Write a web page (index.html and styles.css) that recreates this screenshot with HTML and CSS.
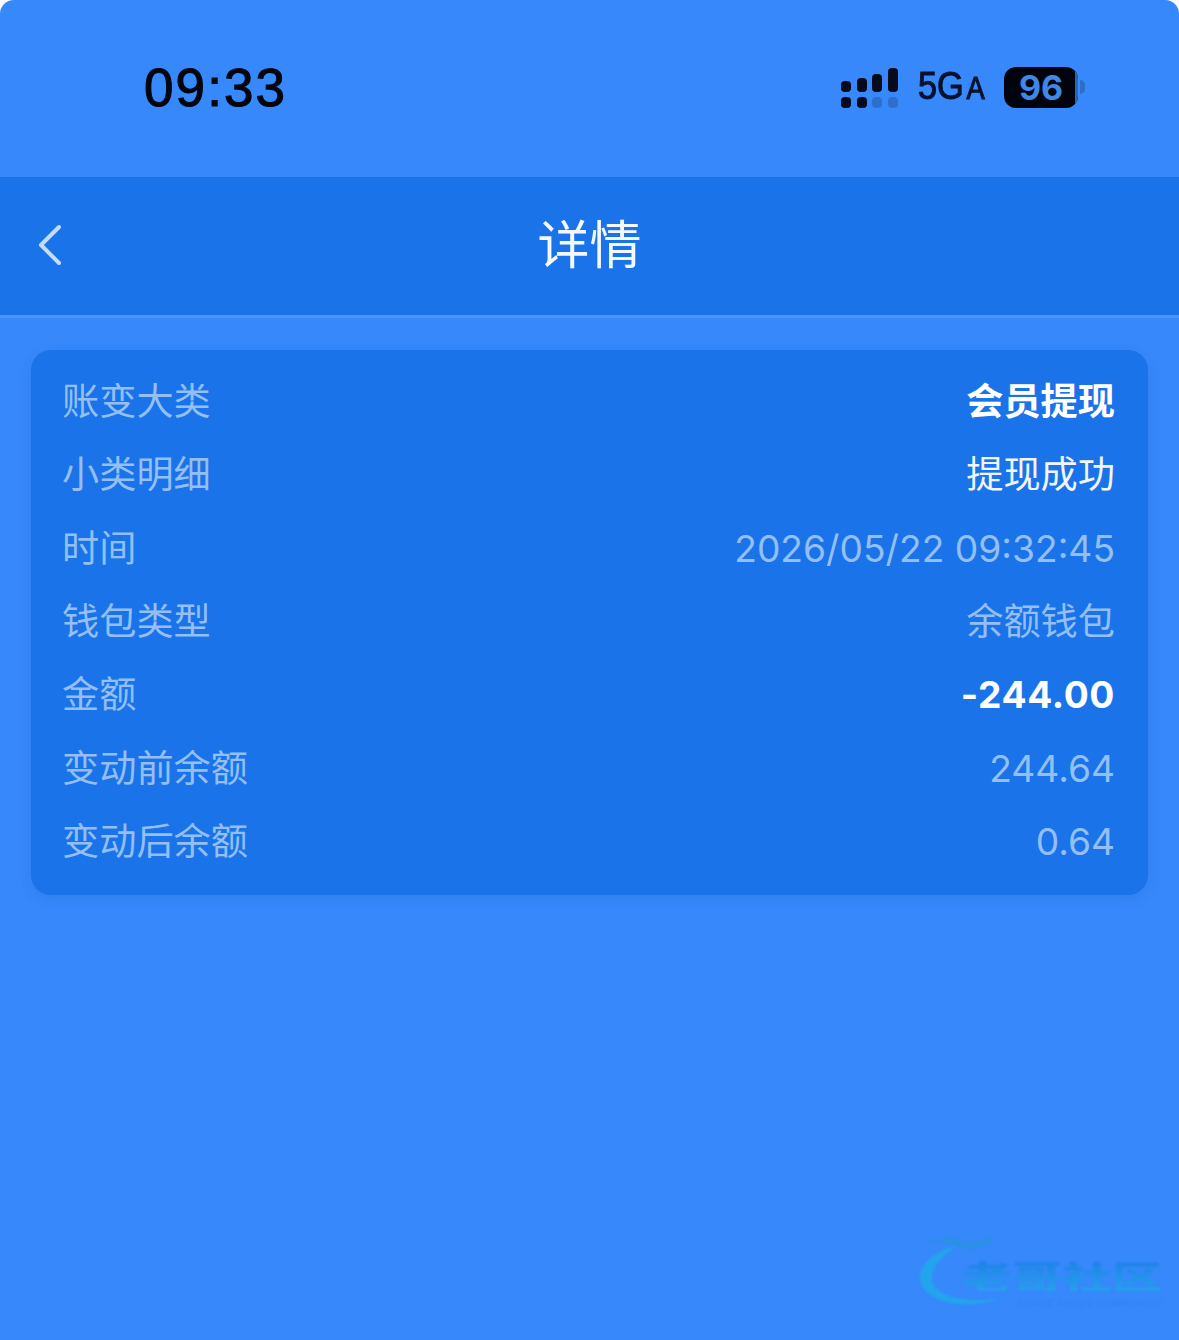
FILE: index.html
```html
<!DOCTYPE html>
<html lang="zh">
<head>
<meta charset="utf-8">
<title>详情</title>
<link rel="stylesheet" href="styles.css">
</head>
<body>
<div class="screen">
  <div class="status">
    <span class="time">09:33</span>
    <div class="indicators">
      <svg class="signal" width="60" height="42" viewBox="0 0 60 42">
        <rect x="1" y="14" width="10" height="11" rx="4" fill="#050b1c"/>
        <rect x="17" y="11" width="10" height="14" rx="4" fill="#050b1c"/>
        <rect x="32" y="7" width="10" height="18" rx="4" fill="#050b1c"/>
        <rect x="48" y="1" width="10" height="24" rx="4" fill="#050b1c"/>
        <rect x="1" y="30" width="10" height="11" rx="4" fill="#050b1c"/>
        <rect x="17" y="30" width="10" height="11" rx="4" fill="#050b1c"/>
        <rect x="32" y="30" width="10" height="11" rx="4" fill="#2f6fcb"/>
        <rect x="48" y="30" width="10" height="11" rx="4" fill="#2f6fcb"/>
      </svg>
      <span class="net">5G<small>A</small></span>
      <div class="battery"><span class="level">96</span><span class="track"></span></div>
      <span class="tip"></span>
    </div>
  </div>
  <header class="navbar">
    <svg class="back" width="30" height="42" viewBox="0 0 30 42">
      <path d="M24 3 L6 21 L24 39" fill="none" stroke="#c3dcfb" stroke-width="4" stroke-linecap="round" stroke-linejoin="round"/>
    </svg>
    <h1 class="title">详情</h1>
  </header>
  <main class="content">
    <section class="card">
      <div class="row"><span class="label">账变大类</span><span class="value strong">会员提现</span></div>
      <div class="row"><span class="label">小类明细</span><span class="value bright">提现成功</span></div>
      <div class="row"><span class="label">时间</span><span class="value">2026/05/22 09:32:45</span></div>
      <div class="row"><span class="label">钱包类型</span><span class="value">余额钱包</span></div>
      <div class="row"><span class="label">金额</span><span class="value strong amount">-244.00</span></div>
      <div class="row"><span class="label">变动前余额</span><span class="value">244.64</span></div>
      <div class="row"><span class="label">变动后余额</span><span class="value">0.64</span></div>
    </section>
  </main>
  <div class="watermark">
    <svg class="swoosh" width="110" height="80" viewBox="0 0 110 80">
      <path d="M38 10 C14 16 0 30 2 44 C5 64 44 78 90 60 C60 70 16 62 14 44 C13 32 24 20 38 10 Z" fill="#23a4ec"/>
      <path d="M0 4 L22 5 L30 0 L52 6 L76 2 L70 10 L50 13 L30 8 Z" fill="#2a90e6"/>
    </svg>
    <span class="wm-text">老哥社区</span>
    <span class="wm-sub">LAOGE SHEQU COMMUNITY</span>
  </div>
</div>
</body>
</html>
```
FILE: styles.css
```css
* { box-sizing: border-box; margin: 0; padding: 0; }
html, body { width: 1179px; height: 1340px; background: #fff; overflow: hidden; }
body { font-family: Inter, "Noto Sans CJK SC", sans-serif; }
.screen {
  position: relative;
  width: 1179px;
  height: 1340px;
  background: #3788fb;
  border-radius: 14px 14px 0 0;
  overflow: hidden;
  display: flex;
  flex-direction: column;
}
.status {
  height: 177px;
  flex: none;
  display: flex;
  justify-content: space-between;
  align-items: flex-start;
  padding: 60px 94px 0 144px;
}
.time {
  font-family: "Liberation Sans", sans-serif;
  font-size: 53px;
  line-height: 56px;
  font-weight: 400;
  color: #02060f;
  -webkit-text-stroke: 1.1px #02060f;
  letter-spacing: 2.1px;
}
.indicators { display: flex; align-items: center; height: 58px; margin-top: -2px; }
.signal { display: block; margin: 1px 0 0 -1px; }
.net {
  font-family: "Liberation Sans", sans-serif;
  font-size: 39px;
  line-height: 42px;
  color: #07122c;
  margin-left: 18px;
  width: 69px;
  display: flex;
  align-items: baseline;
  transform: scaleX(0.88);
  transform-origin: left center;
  white-space: nowrap;
  -webkit-text-stroke: 1.1px #07122c;
}
.net small { font-size: 31px; margin-left: 3px; }
.battery {
  position: relative;
  width: 74px;
  height: 41px;
  margin-left: 17px;
  border-radius: 12px;
  background: #01040c;
  overflow: hidden;
  display: flex;
  align-items: center;
  justify-content: center;
}
.level {
  font-family: Inter, sans-serif;
  font-weight: 700;
  font-size: 34px;
  line-height: 41px;
  color: #4088e6;
}
.track { position: absolute; right: 0; top: 0; bottom: 0; width: 3px; background: #2a66b8; }
.tip {
  width: 5px;
  height: 14px;
  margin-left: 2px;
  background: #2c6fc9;
  border-radius: 0 8px 8px 0;
}
.navbar {
  position: relative;
  flex: none;
  height: 141px;
  background: #1a73e8;
  border-bottom: 3px solid #4c96fa;
  display: flex;
  align-items: center;
  justify-content: center;
  padding-bottom: 8px;
}
.back { position: absolute; left: 35px; top: 47px; }
.title {
  font-family: "Noto Sans CJK SC", sans-serif;
  font-size: 52px;
  line-height: 60px;
  font-weight: 400;
  color: #f4f8ff;
}
.content { padding: 32px 31px; }
.card {
  background: #1a73e8;
  border-radius: 20px;
  height: 545px;
  padding: 15px 33px 16px 31px;
  display: flex;
  flex-direction: column;
  box-shadow: 0 4px 12px rgba(20, 80, 170, 0.15);
}
.row {
  flex: 1;
  display: flex;
  justify-content: space-between;
  align-items: center;
}
.label {
  font-family: Inter, "Noto Sans CJK SC", sans-serif;
  font-size: 37.2px;
  line-height: 48px;
  color: #93bff6;
}
.value {
  font-family: Inter, "Noto Sans CJK SC", sans-serif;
  font-size: 37.2px;
  line-height: 48px;
  color: #93bff6;
}
.bright { color: #f0f6ff; }
.strong { color: #fff; font-weight: 700; }
.amount { letter-spacing: 0.6px; }
.watermark { position: absolute; left: 918px; top: 1236px; width: 250px; height: 90px; filter: blur(1.3px); }
.swoosh { position: absolute; left: 0; top: 0; }
.wm-text {
  position: absolute;
  left: 44px;
  top: 23px;
  font-family: "Noto Sans CJK SC", sans-serif;
  font-size: 50px;
  line-height: 50px;
  font-weight: 900;
  transform: scaleY(0.64);
  transform-origin: left top;
  background: linear-gradient(180deg, #1f7fe6, #27a0ee);
  -webkit-background-clip: text;
  background-clip: text;
  color: transparent;
  white-space: nowrap;
}
.wm-sub {
  position: absolute;
  left: 100px;
  top: 62px;
  font-family: "Liberation Sans", sans-serif;
  font-size: 9px;
  letter-spacing: 1px;
  color: #2f82ea;
  white-space: nowrap;
}
```
